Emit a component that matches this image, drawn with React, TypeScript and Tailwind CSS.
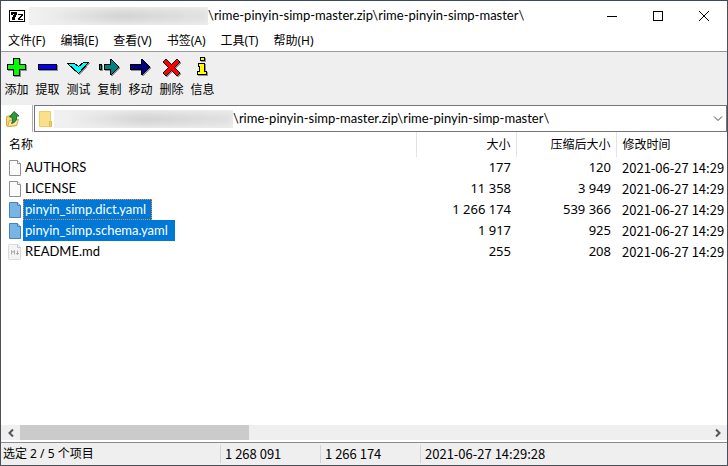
import React from "react";

type FileRow = {
  name: string;
  size: string;
  packed: string;
  modified: string;
  kind: "plain" | "selected" | "markdown";
  focused?: boolean;
};

const files: FileRow[] = [
  { name: "AUTHORS", size: "177", packed: "120", modified: "2021-06-27 14:29", kind: "plain" },
  { name: "LICENSE", size: "11 358", packed: "3 949", modified: "2021-06-27 14:29", kind: "plain" },
  { name: "pinyin_simp.dict.yaml", size: "1 266 174", packed: "539 366", modified: "2021-06-27 14:29", kind: "selected", focused: true },
  { name: "pinyin_simp.schema.yaml", size: "1 917", packed: "925", modified: "2021-06-27 14:29", kind: "selected" },
  { name: "README.md", size: "255", packed: "208", modified: "2021-06-27 14:29", kind: "markdown" },
];

const menus = ["文件(F)", "编辑(E)", "查看(V)", "书签(A)", "工具(T)", "帮助(H)"];

const archivePath = "\\rime-pinyin-simp-master.zip\\rime-pinyin-simp-master\\";

// Each toolbar glyph is a black-edged shape over a grey copy of itself, one pixel down and right.
function ToolIcon({ d, fill }: { d: string; fill: string }) {
  return (
    <svg width="24" height="20" viewBox="0 0 24 20" shapeRendering="crispEdges" className="ml-1" aria-hidden="true">
      <path d={d} fill="#909090" stroke="#909090" transform="translate(1 1)" />
      <path d={d} fill={fill} stroke="#000" />
    </svg>
  );
}

const tools = [
  { label: "添加", fill: "#00ff00", d: "M8.5 1.5h6v6h6v5h-6v6h-6v-6h-6v-5h6z" },
  { label: "提取", fill: "#0000ff", d: "M2.5 7.5h18v5h-18z" },
  { label: "测试", fill: "#00ffff", d: "M.5 6.5h7l4 3 5-4h5l-10 11z" },
  { label: "复制", fill: "#008080", d: "M1.5 7.5h2v5h-2zM6.5 7.5h6v-5h1l7 7v1l-7 7h-1v-5h-6z" },
  { label: "移动", fill: "#000080", d: "M1.5 7.5h11v-5h1l7 7v1l-7 7h-1v-5h-11z" },
  { label: "删除", fill: "#ff0000", d: "M3.5 4.5l2-2h1l5 5 5-5h1l2 2v1l-5 5 5 5v1l-2 2h-1l-5-5-5 5h-1l-2-2v-1l5-5-5-5z" },
  { label: "信息", fill: "#ffff00", d: "M9.5 .5h4v3h-4zM7.5 6.5h6v8h2v3h-9v-3h2v-5h-1z" },
];

function ArchiveLogo() {
  return (
    <svg width="16" height="12" viewBox="0 0 16 12" shapeRendering="crispEdges" className="shrink-0" aria-hidden="true">
      <path d="M0 0h16v12H0z" fill="#000" />
      <path d="M1 1h14v10H1z" fill="#fff" />
      <path d="M2 2h6v3H7v2H6v3H3V7h1V5h1V4H4v1H2z" fill="#000" />
      <path d="M9 4h5v2h-1v1h-1v1h-1v1h3v1H9V8h1V7h1V6h1V5H9z" fill="#000" />
    </svg>
  );
}

function FileIcon({ kind }: { kind: FileRow["kind"] }) {
  if (kind === "selected") {
    return (
      <svg width="14" height="18" viewBox="0 0 14 18" className="shrink-0" aria-hidden="true">
        <path d="M1.5 1.5h8l3 3v12h-11z" fill="#76b5e6" stroke="#4a82b4" />
        <path d="M9.5 1.5v3h3" fill="#a4d2f4" stroke="#4a82b4" />
      </svg>
    );
  }
  if (kind === "markdown") {
    return (
      <svg width="14" height="18" viewBox="0 0 14 18" className="shrink-0" aria-hidden="true">
        <path d="M.5 2.5q0-1 1-1h8l3 3v11q0 1-1 1h-10q-1 0-1-1z" fill="#f3f3f3" stroke="#dadada" />
        <path d="M9.5 1.5v3h3" fill="none" stroke="#c8c8c8" />
        <path d="M3.5 11.5V7.5l1.5 2 1.5-2v4M9.5 7.5v4M8 10l1.5 1.5L11 10" fill="none" stroke="#aaa" />
      </svg>
    );
  }
  return (
    <svg width="14" height="18" viewBox="0 0 14 18" className="shrink-0" aria-hidden="true">
      <path d="M1.5 1.5h8l3 3v12h-11z" fill="#fbfbfb" stroke="#909090" />
      <path d="M9.5 1.5v3h3" fill="#fff" stroke="#909090" />
    </svg>
  );
}

function HiddenPath() {
  return (
    <span aria-hidden="true" className="flex h-[18px] w-[179px] shrink-0 items-center overflow-hidden bg-[#f0f0f0]">
      <span className="h-3 w-full bg-linear-to-r from-[#f4f4f4] via-[#cfcfcf] to-[#dedede] blur-xs" />
    </span>
  );
}

export default function App() {
  return (
    <main className="flex min-h-screen flex-col border border-[#4b5058] border-t-[#3c4a60] bg-white font-['Noto_Sans','Noto_Sans_CJK_SC',sans-serif] text-xs text-black">
      <header className="flex h-[29px] items-center pl-2">
        <ArchiveLogo />
        <div className="flex min-w-0 flex-1 items-center pl-1">
          <HiddenPath />
          <h1 className="truncate font-['Lato',sans-serif] text-[13px]">{archivePath}</h1>
        </div>
        <div className="flex shrink-0">
          <button type="button" aria-label="最小化" className="flex h-7 w-[46px] items-center justify-center">
            <svg width="10" height="10" shapeRendering="crispEdges"><path d="M0 5.5h10" stroke="#000" /></svg>
          </button>
          <button type="button" aria-label="最大化" className="flex h-7 w-[46px] items-center justify-center">
            <svg width="10" height="10" shapeRendering="crispEdges"><path d="M.5 .5h9v9h-9z" fill="none" stroke="#000" /></svg>
          </button>
          <button type="button" aria-label="关闭" className="flex h-7 w-[46px] items-center justify-center">
            <svg width="10" height="10"><path d="M0 0l10 10M10 0L0 10" stroke="#000" /></svg>
          </button>
        </div>
      </header>

      <nav className="flex h-[21px] items-center gap-[15px] pl-[7px]">
        {menus.map((m) => (
          <button key={m} type="button" className="whitespace-nowrap">{m}</button>
        ))}
      </nav>

      <div role="toolbar" className="flex h-[54px] items-start border-t border-[#9a9a9a] bg-[#efefef] pt-[5px]">
        {tools.map((t) => (
          <button key={t.label} type="button" className="flex w-[31px] flex-col leading-[26px]">
            <ToolIcon d={t.d} fill={t.fill} />
            <span className="w-full text-center">{t.label}</span>
          </button>
        ))}
      </div>

      <div className="flex h-[27px]">
        <button type="button" aria-label="向上一级" className="flex w-8 shrink-0 items-center border-r border-[#b0b0b4] pl-[5px]">
          <svg width="15" height="16" viewBox="0 0 15 16" aria-hidden="true">
            <path d="M.5 5.5l4-1 1 1h5v9l-9 1-1-1z" fill="#f4d67c" stroke="#d6a840" />
            <path d="M1.5 15.5l2-6 9-1-2 6z" fill="#fbe9a8" stroke="#d6a840" />
            <path d="M5.500 12.500q2-2 .5-6.500h-2.500l4.500-5.500 5 4.500h-2.500q1 6-5 7.500z" fill="#2f9a3c" stroke="#1c6e2c" />
          </svg>
        </button>
        <div className="ml-px flex min-w-0 flex-1 items-center border border-[#74747a] pl-1">
          <svg width="13" height="16" viewBox="0 0 13 16" className="shrink-0" aria-hidden="true">
            <path d="M.5 .5h11v15H.5z" fill="#fbe08c" stroke="#f0cc68" />
            <path d="M10.5 10.5h2v5h-2z" fill="#f6d478" stroke="#e0b850" />
          </svg>
          <span className="w-[2px] shrink-0" />
          <HiddenPath />
          <input aria-label="路径" defaultValue={archivePath} className="min-w-0 flex-1 bg-transparent font-['Lato',sans-serif] text-[13px] outline-none" />
          <button type="button" aria-label="展开路径列表" className="flex w-[17px] shrink-0 items-center justify-center">
            <svg width="10" height="6" viewBox="0 0 10 6"><path d="M1 .5l4 4 4-4" fill="none" stroke="#444" /></svg>
          </button>
        </div>
      </div>

      <section className="flex flex-1 flex-col overflow-hidden">
        <table className="w-full table-fixed border-collapse whitespace-nowrap">
          <colgroup>
            <col />
            <col className="w-[100px]" />
            <col className="w-[100px]" />
            <col className="w-[111px]" />
          </colgroup>
          <thead>
            <tr className="h-[25px]">
              <th className="border-r border-[#e2e2e2] p-0 pl-2 text-left font-normal">名称</th>
              <th className="border-r border-[#e2e2e2] p-0 pr-[5px] text-right font-normal">大小</th>
              <th className="border-r border-[#e2e2e2] p-0 pr-[5px] text-right font-normal">压缩后大小</th>
              <th className="p-0 pl-[6px] text-left font-normal">修改时间</th>
            </tr>
          </thead>
          <tbody className="text-[13px]">
            {files.map((f) => (
              <tr key={f.name} className="h-[21px]">
                <td className="p-0 pl-[7px]">
                  <div className="flex h-[21px] items-center gap-px font-['Lato',sans-serif]">
                    <FileIcon kind={f.kind} />
                    <span
                      className={
                        f.kind === "selected"
                          ? f.focused
                            ? "flex h-[21px] items-center border border-dotted border-[#ff8728] bg-[#0078d7] pr-[5px] pl-px text-white"
                            : "flex h-[21px] items-center bg-[#0078d7] pr-[7px] pl-[2px] text-white"
                          : "pl-[2px]"
                      }
                    >
                      {f.name}
                    </span>
                  </div>
                </td>
                <td className="p-0 pr-[5px] text-right">{f.size}</td>
                <td className="p-0 pr-[5px] text-right">{f.packed}</td>
                <td className="p-0 pl-[6px] font-['Noto_Sans_CJK_SC',sans-serif] leading-5">{f.modified}</td>
              </tr>
            ))}
          </tbody>
        </table>

        <div className="mt-auto flex h-[15px] shrink-0 items-stretch bg-[#efefef]">
          <button type="button" aria-label="向左滚动" className="flex w-[19px] items-center justify-center">
            <svg width="6" height="8" viewBox="0 0 6 8"><path d="M5 .5L1.5 4 5 7.5" fill="none" stroke="#555" strokeWidth="2" /></svg>
          </button>
          <div className="flex flex-1">
            <div className="w-1/3 bg-[#cbcbcb]" />
          </div>
          <button type="button" aria-label="向右滚动" className="flex w-[19px] items-center justify-center">
            <svg width="6" height="8" viewBox="0 0 6 8"><path d="M1 .5L4.5 4 1 7.5" fill="none" stroke="#555" strokeWidth="2" /></svg>
          </button>
        </div>
      </section>

      <footer className="mt-[2px] flex h-[23px] items-center border-t border-[#8a8a90] bg-[#efefef] font-['Noto_Sans_CJK_SC',sans-serif] text-[13px]">
        <div className="w-[219px] pl-[2px] font-['Noto_Sans','Noto_Sans_CJK_SC',sans-serif] text-xs">选定 2 / 5 个项目</div>
        <div className="w-[100px] border-l border-[#d4d4d4] pl-1">1 268 091</div>
        <div className="w-[100px] border-l border-[#d4d4d4] pl-1">1 266 174</div>
        <div className="flex-1 border-l border-[#d4d4d4] pl-1">2021-06-27 14:29:28</div>
      </footer>
    </main>
  );
}
